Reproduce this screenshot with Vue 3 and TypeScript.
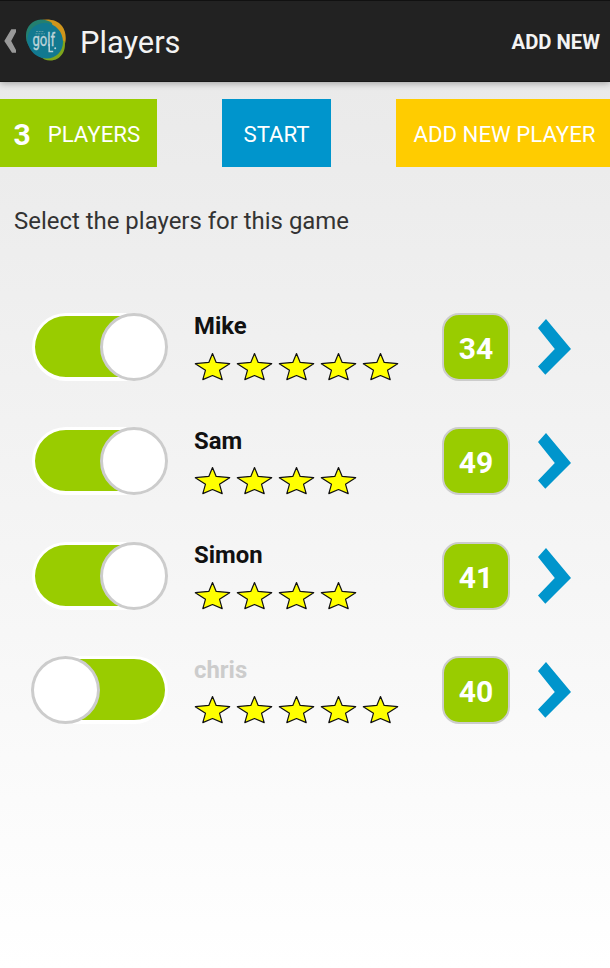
<script setup lang="ts">
import { computed, ref } from 'vue'

interface Player {
  name: string
  stars: number
  score: number
  active: boolean
}

const players = ref<Player[]>([
  { name: 'Mike', stars: 5, score: 34, active: true },
  { name: 'Sam', stars: 4, score: 49, active: true },
  { name: 'Simon', stars: 4, score: 41, active: true },
  { name: 'chris', stars: 5, score: 40, active: false },
])

const activeCount = computed(() => players.value.filter((p) => p.active).length)
</script>

<template>
  <div class="screen">
    <header class="bar">
      <svg class="back" width="12" height="26" viewBox="0 0 12 26">
        <path d="M7.3 1.3H12V4L7.2 13L12 22V24.7H8L.3 13Z" fill="#999" />
      </svg>
      <svg class="logo" width="42" height="44" viewBox="0 0 42 44">
        <path d="M8 4C17-1 31-1 37 7C41 12 42 21 39 27L20 24Z" fill="#cf951c" />
        <path d="M39.5 22C42 33 34 42 25 41.5C21 41.5 18 40 15 37L28 18Z" fill="#7fa51c" />
        <path d="M1 16C1 8 7 1 16 .5C20 .5 24 2 27 4C30 20 14 30 4 27C1 23 1 19 1 16Z" fill="#237f70" />
        <path d="M2.5 19C3.5 10 12 3.2 21 4C31 5 38 13 38 23C38 33 30 40 21 39.5C10 39 1.5 29 2.5 19Z" fill="#127990" />
        <path d="M11 12.5H19M10.5 14.8H20" stroke="#5b9ba6" stroke-width="1" stroke-dasharray="2 .7" />
        <text x="7.5" y="27" font-size="18.5" textLength="22.5" lengthAdjust="spacingAndGlyphs" fill="#bdd3d8" stroke="#bdd3d8" stroke-width=".4">golf</text>
        <path d="M24.2 25V32.4H28.2" stroke="#bdd3d8" stroke-width="1.5" fill="none" />
        <circle cx="30.2" cy="29.3" r="1" fill="#bdd3d8" />
      </svg>
      <h1>Players</h1>
      <button class="add">ADD NEW</button>
    </header>
    <div class="actions">
      <div class="tile green"><b>{{ activeCount }}</b><span>PLAYERS</span></div>
      <button class="tile blue"><span>START</span></button>
      <button class="tile yellow"><span>ADD NEW PLAYER</span></button>
    </div>
    <p class="hint">Select the players for this game</p>
    <ul class="list">
      <li v-for="p in players" :key="p.name" class="row">
        <button class="toggle" :class="{ off: !p.active }" @click="p.active = !p.active">
          <span class="knob"></span>
        </button>
        <div class="info">
          <div class="name" :class="{ muted: !p.active }">{{ p.name }}</div>
          <div class="stars">
            <svg v-for="n in p.stars" :key="n" width="37" height="29" viewBox="0 0 37 29">
              <path
                d="M18.5 1.5L22.2 10.4L35.7 11.7L25.5 18.2L28.2 27.6L18.5 23.5L8.8 27.6L11.5 18.2L1.3 11.7L14.8 10.4Z"
                fill="#ff0" stroke="#111" stroke-width="1.2" stroke-linejoin="round"
              />
            </svg>
          </div>
        </div>
        <div class="score">{{ p.score }}</div>
        <svg class="chevron" width="34" height="56" viewBox="0 0 34 56">
          <path d="M9 0L34 30L8.3 55.7L1 47.5L17.8 30L1 9Z" fill="#0095cc" />
        </svg>
      </li>
    </ul>
  </div>
</template>

<style>
body { margin: 0; }
</style>

<style scoped>
.screen {
  height: 968px;
  overflow: hidden;
  font-family: Roboto, sans-serif;
  background: linear-gradient(#e8e8e8, #fff);
}
button {
  border: 0;
  padding: 0;
  font-family: inherit;
  background: none;
}
.bar {
  box-sizing: border-box;
  height: 82px;
  display: flex;
  align-items: center;
  padding: 0 10px 0 4px;
  background: #222;
  border-top: 1px solid #111;
  border-bottom: 1px solid #181818;
  box-shadow: 0 1px 7px rgba(0, 0, 0, 0.35);
}
.logo { margin-left: 9px; }
h1 {
  margin: 3px 0 0 13px;
  font-size: 30.8px;
  font-weight: 400;
  line-height: 40px;
  color: #f3f3f3;
}
.add {
  margin: 2px 0 0 auto;
  font-size: 20.3px;
  font-weight: 700;
  color: #f3f3f3;
}
.actions {
  display: flex;
  justify-content: space-between;
  margin-top: 17px;
}
.tile {
  box-sizing: border-box;
  height: 68px;
  display: flex;
  align-items: center;
  justify-content: center;
  padding-top: 1px;
  font-size: 22.2px;
  line-height: 30px;
  color: #fff;
  white-space: nowrap;
}
.green { width: 157px; justify-content: flex-start; padding-left: 13.5px; background: #9c0; }
.green b { font-size: 30px; margin: 2px 17px 0 0; }
.blue { width: 109px; background: #0095cc; }
.yellow { width: 214px; padding-left: 3px; background: #fc0; }
.hint {
  margin: 39px 0 0 14px;
  font-size: 23.95px;
  line-height: 30px;
  color: #333;
}
.list {
  list-style: none;
  margin: 53.6px 0 0;
  padding: 0;
}
.row {
  height: 114.5px;
  display: flex;
  align-items: center;
  padding-left: 31px;
}
.toggle {
  box-sizing: border-box;
  width: 137px;
  height: 68px;
  display: flex;
  justify-content: flex-end;
  position: relative;
}
.toggle::before {
  content: '';
  position: absolute;
  box-sizing: border-box;
  inset: 0 0 0 1px;
  border: 3px solid #fff;
  border-bottom-width: 4px;
  border-radius: 34px;
  background: #9c0;
}
.toggle.off { justify-content: flex-start; }
.knob {
  box-sizing: border-box;
  position: relative;
  width: 68px;
  height: 68px;
  border: 3px solid #ccc;
  border-radius: 50%;
  background: #fff;
}
.toggle.off .knob { width: 69px; }
.info { width: 248px; margin: -2px 0 0 25px; }
.name {
  margin-left: 1px;
  font-size: 23.9px;
  font-weight: 700;
  line-height: 30px;
  color: #111;
}
.name.muted { color: #ccc; }
.stars {
  display: flex;
  gap: 5.2px;
  margin: 10.4px 0 0 0.5px;
}
.stars svg { flex: none; }
.score {
  box-sizing: border-box;
  width: 68px;
  height: 68px;
  margin-left: 1px;
  display: flex;
  align-items: center;
  justify-content: center;
  padding-top: 3px;
  border: 2px solid #ccc;
  border-radius: 17px;
  background: #9c0;
  color: #fff;
  font-size: 30px;
  font-weight: 700;
}
.chevron { margin-left: 27px; }
</style>
